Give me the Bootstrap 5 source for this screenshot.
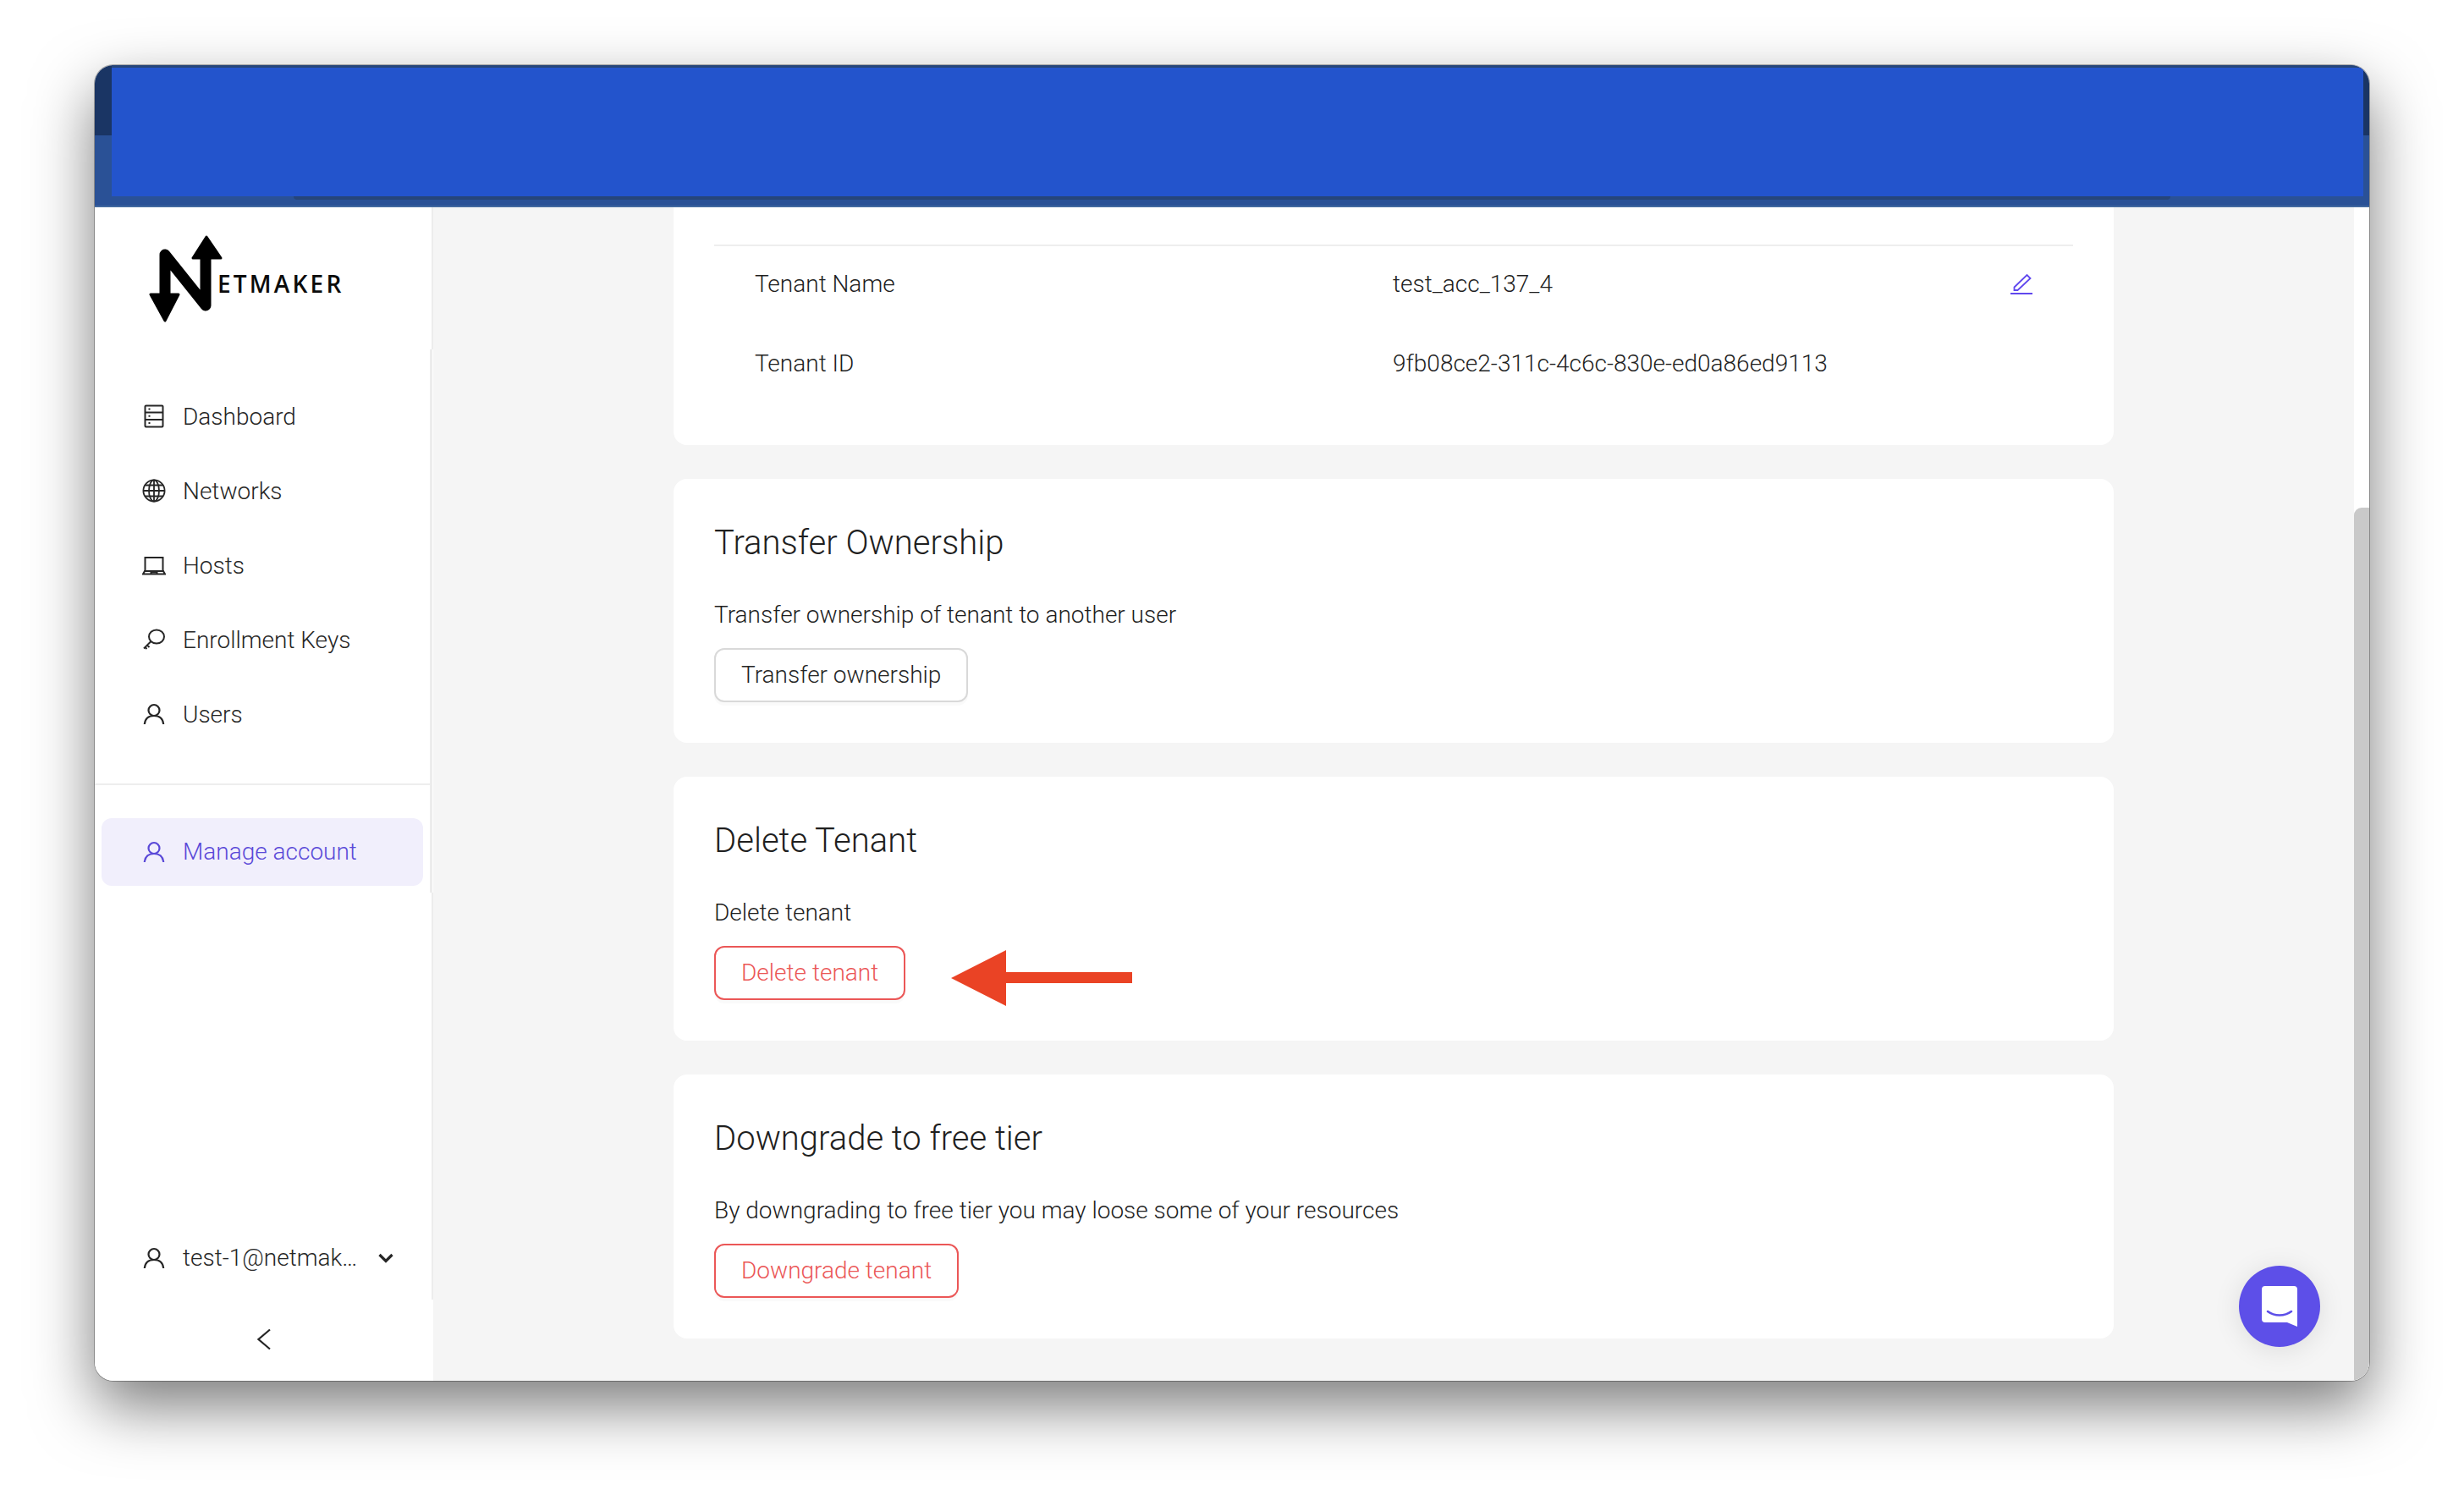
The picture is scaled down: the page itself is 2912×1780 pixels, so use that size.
<!doctype html>
<html lang="en">
<head>
<meta charset="utf-8">
<title>Netmaker</title>
<link href="https://cdn.jsdelivr.net/npm/bootstrap@5.3.0/dist/css/bootstrap.min.css" rel="stylesheet">
<style>
html,body{height:100%}
body{background:#fff;font-family:Roboto,"Liberation Sans",sans-serif;color:#1f1f1f;font-size:28px;padding:77px 112px 148px;overflow:hidden}
.win{height:1555px;border-radius:22px;overflow:hidden;position:relative;box-shadow:0 0 0 1px rgba(0,0,0,.28),0 30px 72px rgba(0,0,0,.52);background:#fff}
.topbar{height:168px;background:linear-gradient(#1a3564 0 83px,#2a5196 83px);border-bottom:2px solid #41689f}
.topfill{height:152px;margin:3px 7px 0 20px;background:#2354cc;box-shadow:0 -3px 0 #264579}
.topedge{height:4px;margin:0 235px;background:#264579;border-radius:0 0 14px 14px}
.appbody{height:1387px}
.side{width:400px;flex:none;background:#fff}
.seg-logo{height:168px;width:400px;border-right:2px solid #ececec;padding:33px 0 0 64px}
.seg-nav{height:642px;width:399px;border-right:3px solid #ececec;padding-top:35px}
.seg-user{height:481px;width:400px;border-right:2px solid #ececec}
.seg-back{height:96px;width:400px}
.logoword{font-family:"Open Sans",sans-serif;font-weight:600;font-size:28px;letter-spacing:3.2px;color:#0b0b0b;line-height:1;margin:43px 0 0 -9px}
.navrow{height:88px;padding-left:56px;gap:20px;color:#262626;text-decoration:none;font-weight:300}
.navrow span{padding-top:2px}
.navico{width:28px;height:28px;flex:none}
.navsep{height:2px;background:#eee;margin:38px 0 39px}
.navcur{height:80px;margin:0 8px;padding-left:48px;gap:20px;background:#f1effc;color:#5a49d8;border-radius:12px;font-weight:300}
.userrow{padding:0 0 0 56px;height:88px;margin-top:388px;gap:20px;font-weight:300;color:#262626}
.userrow .uname{width:207px;white-space:nowrap}
.backico{margin-top:34px}
.pane{background:#f5f5f5;min-width:0}
.pane-in{padding-left:284px;width:1986px;flex:none}
.panel{border:0;border-radius:16px;width:1702px;background:#fff;margin-bottom:40px;padding:49px 48px 48px;height:312px}
.panel-top{height:281px;border-radius:0 0 16px 16px;padding:44px 48px 0}
.infosep{height:2px;background:#eee}
.inforow{height:94px;padding-left:48px;font-weight:300}
.inforow .k{width:754px}
.firstrow{margin-top:-2px}
.ptitle{font-size:40px;line-height:54px;font-weight:300;margin:0 0 36px;color:#1f1f1f}
.pdesc{line-height:44px;margin-bottom:17px;font-weight:300}
.ghostbtn{height:64px;padding:0 30px;font-size:28px;font-weight:300;line-height:60px;border:2px solid #d9d9d9;border-radius:12px;background:#fff;color:#262626;box-shadow:0 4px 0 rgba(0,0,0,.02)}
.ghostbtn.red{border-color:#eb5757;color:#eb5757}
.railbar{width:18px;flex:none;background:#fff;margin-left:auto;padding-top:355px}
.railthumb{height:1032px;background:#c9c9c9;border-radius:9px 0 0 0}
.arrowmark{margin-left:54px;margin-top:5px}
.chatbtn{position:absolute;left:2534px;top:1419px;width:96px;height:96px;border-radius:50%;background:#5d4fe8;box-shadow:0 4px 32px rgba(0,0,0,.1)}
</style>
</head>
<body>
<div class="win d-flex flex-column">
  <div class="topbar">
    <div class="topfill"></div>
    <div class="topedge"></div>
  </div>
  <div class="appbody d-flex">
    <aside class="side d-flex flex-column">
      <div class="seg-logo d-flex">
        <svg width="90" height="106" viewBox="0 0 90 106" aria-hidden="true">
          <path d="M19 23 V70 M19 23 L67 83 M67 83 V26" fill="none" stroke="#000" stroke-width="13" stroke-linecap="round" stroke-linejoin="round"/>
          <path d="M2 70 H35 L19 101 Z" fill="#000" stroke="#000" stroke-width="3" stroke-linejoin="round"/>
          <path d="M52 27 H85 L68 2 Z" fill="#000" stroke="#000" stroke-width="3" stroke-linejoin="round"/>
        </svg>
        <span class="logoword">ETMAKER</span>
      </div>
      <div class="seg-nav">
        <a class="navrow d-flex align-items-center" href="#">
          <svg class="navico" viewBox="0 0 28 28" fill="none" stroke="#262626" stroke-width="2"><rect x="3.500" y="1.500" width="21" height="25" rx="1"/><path d="M3.500 9.500h21M3.500 18h21"/><path d="M7.500 5.500h2M7.500 13.700h2M7.500 22h2"/></svg>
          <span>Dashboard</span>
        </a>
        <a class="navrow d-flex align-items-center" href="#">
          <svg class="navico" viewBox="0 0 28 28" fill="none" stroke="#262626" stroke-width="1.800"><circle cx="14" cy="14" r="12.600"/><ellipse cx="14" cy="14" rx="6" ry="12.600"/><path d="M14 1.400v25.200M1.400 14h25.200M3.500 7.500h21M3.500 20.500h21"/></svg>
          <span>Networks</span>
        </a>
        <a class="navrow d-flex align-items-center" href="#">
          <svg class="navico" viewBox="0 0 28 28" fill="none" stroke="#262626" stroke-width="2"><path d="M3.500 21V5h21v16"/><path d="M1 24.500 3 21h22l2 3.500Z"/><path d="M10.500 24v-1.500h7V24"/></svg>
          <span>Hosts</span>
        </a>
        <a class="navrow d-flex align-items-center" href="#">
          <svg class="navico" viewBox="0 0 28 28" fill="none" stroke="#262626" stroke-width="2"><ellipse cx="17" cy="10.500" rx="9" ry="8"/><path d="M10.500 16 2 24.500M6 20.500l2.500 2.500M3.500 23l2 2"/></svg>
          <span>Enrollment Keys</span>
        </a>
        <a class="navrow d-flex align-items-center" href="#">
          <svg class="navico" viewBox="0 0 28 28" fill="none" stroke="#262626" stroke-width="2.200"><circle cx="14" cy="9.500" r="6.500"/><path d="M2.800 26c.6-6 4.400-10 11.200-10s10.600 4 11.200 10"/></svg>
          <span>Users</span>
        </a>
        <div class="navsep"></div>
        <a class="navcur d-flex align-items-center text-decoration-none" href="#">
          <svg class="navico" viewBox="0 0 28 28" fill="none" stroke="#5a49d8" stroke-width="2.200"><circle cx="14" cy="9.500" r="6.500"/><path d="M2.800 26c.6-6 4.400-10 11.200-10s10.600 4 11.200 10"/></svg>
          <span>Manage account</span>
        </a>
      </div>
      <div class="seg-user">
        <div class="userrow d-flex align-items-center">
          <svg class="navico" viewBox="0 0 28 28" fill="none" stroke="#262626" stroke-width="2.200"><circle cx="14" cy="9.500" r="6.500"/><path d="M2.800 26c.6-6 4.400-10 11.200-10s10.600 4 11.200 10"/></svg>
          <span class="uname">test-1@netmak…</span>
          <svg width="18" height="12" viewBox="0 0 18 12" fill="none" stroke="#262626" stroke-width="3.200" class="ms-1"><path d="M1.500 2 9 9.500 16.500 2"/></svg>
        </div>
      </div>
      <div class="seg-back d-flex justify-content-center align-items-start">
        <svg class="backico" width="16" height="26" viewBox="0 0 16 26" fill="none" stroke="#262626" stroke-width="2.200"><path d="M15 1.500 1.500 13 15 24.500"/></svg>
      </div>
    </aside>
    <main class="pane flex-grow-1 d-flex">
      <div class="pane-in">
        <section class="card panel panel-top">
          <div class="infosep"></div>
          <div class="inforow d-flex align-items-center firstrow">
            <span class="k">Tenant Name</span>
            <span class="flex-grow-1">test_acc_137_4</span>
            <svg class="me-5" width="26" height="24" viewBox="0 0 26 24" fill="none" stroke="#6048ee" stroke-width="1.800"><path d="M4.500 19h4L23.500 5 19.500 1 4.500 15.500Z"/><path d="M0 23h26" stroke-width="2"/></svg>
          </div>
          <div class="inforow d-flex align-items-center">
            <span class="k">Tenant ID</span>
            <span>9fb08ce2-311c-4c6c-830e-ed0a86ed9113</span>
          </div>
        </section>
        <section class="card panel">
          <h2 class="ptitle">Transfer Ownership</h2>
          <p class="pdesc">Transfer ownership of tenant to another user</p>
          <div><button type="button" class="btn ghostbtn">Transfer ownership</button></div>
        </section>
        <section class="card panel">
          <h2 class="ptitle">Delete Tenant</h2>
          <p class="pdesc">Delete tenant</p>
          <div class="d-flex align-items-start">
            <button type="button" class="btn ghostbtn red">Delete tenant</button>
            <svg class="arrowmark" width="214" height="66" viewBox="0 0 214 66" aria-hidden="true"><path d="M0 33 65 0V26H214V39H65V66Z" fill="#ea4325"/></svg>
          </div>
        </section>
        <section class="card panel mb-0">
          <h2 class="ptitle">Downgrade to free tier</h2>
          <p class="pdesc">By downgrading to free tier you may loose some of your resources</p>
          <div><button type="button" class="btn ghostbtn red">Downgrade tenant</button></div>
        </section>
      </div>
      <div class="railbar"><div class="railthumb"></div></div>
    </main>
  </div>
  <button type="button" class="chatbtn border-0 p-0 d-flex align-items-center justify-content-center" aria-label="Chat">
    <svg width="42" height="48" viewBox="0 0 42 48"><path d="M4 0H38a4 4 0 0 1 4 4V48L30 43H4a4 4 0 0 1-4-4V4A4 4 0 0 1 4 0Z" fill="#fff"/><path d="M7 30c8 6 20 6 28 0" fill="none" stroke="#5d4fe8" stroke-width="2.600" stroke-linecap="round"/></svg>
  </button>
</div>
<script src="https://cdn.jsdelivr.net/npm/bootstrap@5.3.0/dist/js/bootstrap.bundle.min.js"></script>
</body>
</html>
